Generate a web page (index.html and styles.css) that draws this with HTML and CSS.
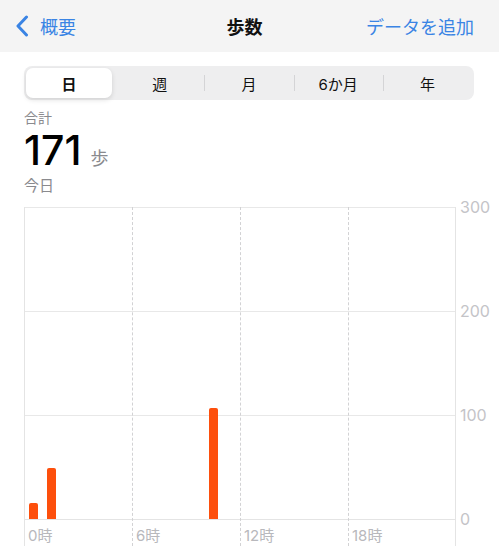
FILE: index.html
```html
<!DOCTYPE html>
<html lang="ja">
<head>
    <meta charset="UTF-8">
    <meta name="viewport" content="width=device-width, initial-scale=1.0">
    <title>歩数</title>
    <link rel="stylesheet" href="styles.css">
</head>
<body>

    <div class="navBar">
        <a class="backLink" href="#">
            <svg class="chevron" width="14" height="22" viewBox="0 0 14 22">
                <path d="M11.5 2 L3 11 L11.5 20" fill="none" stroke="currentColor" stroke-width="3" stroke-linecap="round" stroke-linejoin="round"/>
            </svg>
            <span>概要</span>
        </a>
        <div class="navTitle">歩数</div>
        <a class="addLink" href="#">データを追加</a>
    </div>

    <div class="segments">
        <div class="segment selected">日</div>
        <div class="segment">週</div>
        <div class="segment">月</div>
        <div class="segment">6か月</div>
        <div class="segment">年</div>
    </div>

    <div class="summary">
        <div class="summaryLabel">合計</div>
        <div class="summaryTotal"><span class="totalNumber">171</span><span class="totalUnit">歩</span></div>
        <div class="summaryDate">今日</div>
    </div>

    <div class="chart">
        <div class="plot">
            <div class="area">
                <div class="hrow"></div>
                <div class="hrow"></div>
                <div class="hrow"></div>
                <div class="bars" id="bars"></div>
            </div>
            <div class="xLabels">
                <div>0時</div>
                <div>6時</div>
                <div>12時</div>
                <div>18時</div>
            </div>
            <div class="vgrid">
                <div class="vcol"></div>
                <div class="vcol"></div>
                <div class="vcol"></div>
                <div class="vcol"></div>
            </div>
        </div>
        <div class="yLabels">
            <div>300</div>
            <div>200</div>
            <div>100</div>
            <div>0</div>
        </div>
    </div>

    <script>
        // steps per hour
        let hourlySteps = [15, 49, 0, 0, 0, 0, 0, 0, 0, 0, 107, 0, 0, 0, 0, 0, 0, 0, 0, 0, 0, 0, 0, 0];
        let barsEl = document.getElementById('bars');
        hourlySteps.forEach(function (steps) {
            let slot = document.createElement('div');
            slot.className = 'barSlot';
            if (steps > 0) {
                let bar = document.createElement('div');
                bar.className = 'bar';
                bar.style.height = (steps * 312 / 300) + 'px';
                slot.appendChild(bar);
            }
            barsEl.appendChild(slot);
        });
    </script>
</body>
</html>
```

FILE: styles.css
```css
body {
    margin: 0;
    font-family: Inter, "Noto Sans CJK JP", sans-serif;
    background-color: #fff;
    color: #000;
}
a {
    text-decoration: none;
}
.navBar {
    display: grid;
    grid-template-columns: 1fr auto 1fr;
    align-items: center;
    height: 52px;
    padding: 0 25px 0 15px;
    background-color: #f4f4f4;
    font-size: 18px;
}
.backLink {
    display: flex;
    align-items: center;
    gap: 11px;
    color: #3a84e4;
}
.chevron {
    display: block;
}
.navTitle {
    font-weight: 700;
    color: #111;
}
.addLink {
    text-align: right;
    color: #3a84e4;
}
.segments {
    display: grid;
    grid-template-columns: repeat(5, 1fr);
    height: 34px;
    margin: 14px 25px 0 24px;
    padding: 2px;
    box-sizing: border-box;
    background-color: #eeeeef;
    border-radius: 8px;
}
.segment {
    position: relative;
    display: flex;
    align-items: center;
    justify-content: center;
    font-size: 15px;
    font-weight: 400;
    color: #111;
}
.segment + .segment::before {
    content: "";
    position: absolute;
    left: 0;
    top: 7px;
    bottom: 7px;
    border-left: 1px solid #d4d4d6;
}
.segment.selected {
    background-color: #fff;
    border-radius: 7px;
    font-weight: 600;
    box-shadow: 0 2px 5px rgba(0, 0, 0, 0.12);
    margin-right: 3px;
}
.segment.selected + .segment::before {
    display: none;
}
.summary {
    padding-left: 24px;
}
.summaryLabel {
    margin-top: 9px;
    font-size: 14px;
    line-height: 18px;
    color: #8a8a8e;
}
.summaryTotal {
    display: flex;
    align-items: baseline;
    gap: 9px;
    height: 46px;
    line-height: 46px;
}
.totalNumber {
    font-size: 41px;
    font-weight: 500;
    letter-spacing: 0;
}
.totalUnit {
    font-size: 18px;
    line-height: 20px;
    color: #8a8a8e;
}
.summaryDate {
    margin-top: 3px;
    font-size: 15px;
    line-height: 20px;
    color: #8a8a8e;
}
.chart {
    display: flex;
    margin: 11px 0 0 24px;
}
.plot {
    position: relative;
    width: 432px;
}
.area {
    position: relative;
    border-bottom: 1px solid #e4e4e4;
}
.hrow {
    height: 104px;
    box-sizing: border-box;
    border-top: 1px solid #e8e8e8;
}
.bars {
    position: absolute;
    inset: 0;
    display: grid;
    grid-template-columns: repeat(24, 1fr);
    align-items: end;
}
.barSlot {
    display: flex;
    justify-content: center;
}
.bar {
    width: 9px;
    background-color: #fd4f0c;
    border-radius: 2px 2px 0 0;
}
.xLabels {
    display: grid;
    grid-template-columns: repeat(4, 1fr);
    padding-top: 6px;
    font-size: 15px;
    line-height: 20px;
    color: #b8b8bc;
}
.xLabels > div {
    padding-left: 4px;
}
.vgrid {
    position: absolute;
    inset: 0;
    display: grid;
    grid-template-columns: repeat(4, 1fr);
    pointer-events: none;
}
.vcol {
    border-left: 1px dashed #d2d2d4;
}
.vcol:first-child {
    border-left: 1px solid #e4e4e4;
}
.vcol:last-child {
    border-right: 1px solid #e4e4e4;
}
.yLabels {
    display: flex;
    flex-direction: column;
    gap: 84px;
    margin-top: -10px;
    padding-left: 4px;
    font-size: 16px;
    line-height: 20px;
    color: #c4c4c8;
}
```
